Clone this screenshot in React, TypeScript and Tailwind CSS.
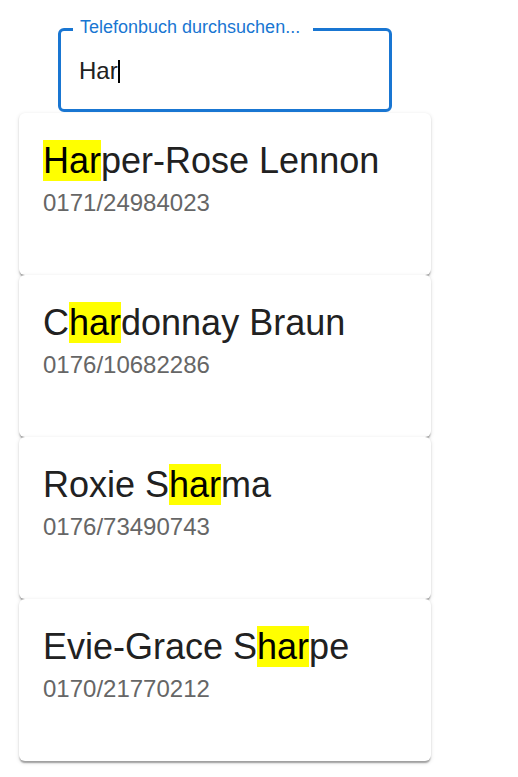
import React from 'react';

type Entry = { name: string; number: string };

const entries: Entry[] = [
  { name: 'Harper-Rose Lennon', number: '0171/24984023' },
  { name: 'Chardonnay Braun', number: '0176/10682286' },
  { name: 'Roxie Sharma', number: '0176/73490743' },
  { name: 'Evie-Grace Sharpe', number: '0170/21770212' },
];

const query = 'Har';

// wraps the first match of the query in a yellow mark
const Highlight = ({ text }: { text: string }) => {
  const i = text.toLowerCase().indexOf(query.toLowerCase());
  if (i < 0) return <>{text}</>;
  return (
    <>
      {text.slice(0, i)}
      <span className="bg-[#ffff00] text-black">{text.slice(i, i + query.length)}</span>
      {text.slice(i + query.length)}
    </>
  );
};

const SearchField = () => (
  <div className="relative ml-[39px] h-[84px] w-[334px] rounded-[6px] border-[3px] border-[#1976d2] bg-white">
    <span className="absolute left-[12px] top-[-13px] w-[240px] bg-white pl-[7px] text-[18px] leading-[18px] text-[#1976d2]">
      Telefonbuch durchsuchen...
    </span>
    <div className="flex items-center pl-[18px] pt-[22px] text-[24px] leading-[36px] text-[#212121]">
      <span>{query}</span>
      <span className="h-[23px] w-[2px] bg-black" />
    </div>
  </div>
);

const EntryCard = ({ entry }: { entry: Entry }) => (
  <div className="h-[162px] w-[412px] rounded-[6px] bg-white px-[24px] pt-[24px] shadow-[0_3px_1.5px_-1.5px_rgba(0,0,0,0.2),0_1.5px_1.5px_0_rgba(0,0,0,0.14),0_1.5px_4.5px_0_rgba(0,0,0,0.12)]">
    <div className="text-[36px] leading-[48px] text-[#212121]">
      <Highlight text={entry.name} />
    </div>
    <div className="text-[24px] leading-[36px] text-[#666666]">{entry.number}</div>
  </div>
);

export default function App() {
  return (
    <div
      className="min-h-[777px] w-[518px] bg-white pl-[19px] pt-[28px]"
      style={{ fontFamily: '"Liberation Sans", Arial, sans-serif' }}
    >
      <SearchField />
      <div className="mt-[1px] flex flex-col">
        {entries.map((e) => (
          <EntryCard key={e.number} entry={e} />
        ))}
      </div>
    </div>
  );
}
